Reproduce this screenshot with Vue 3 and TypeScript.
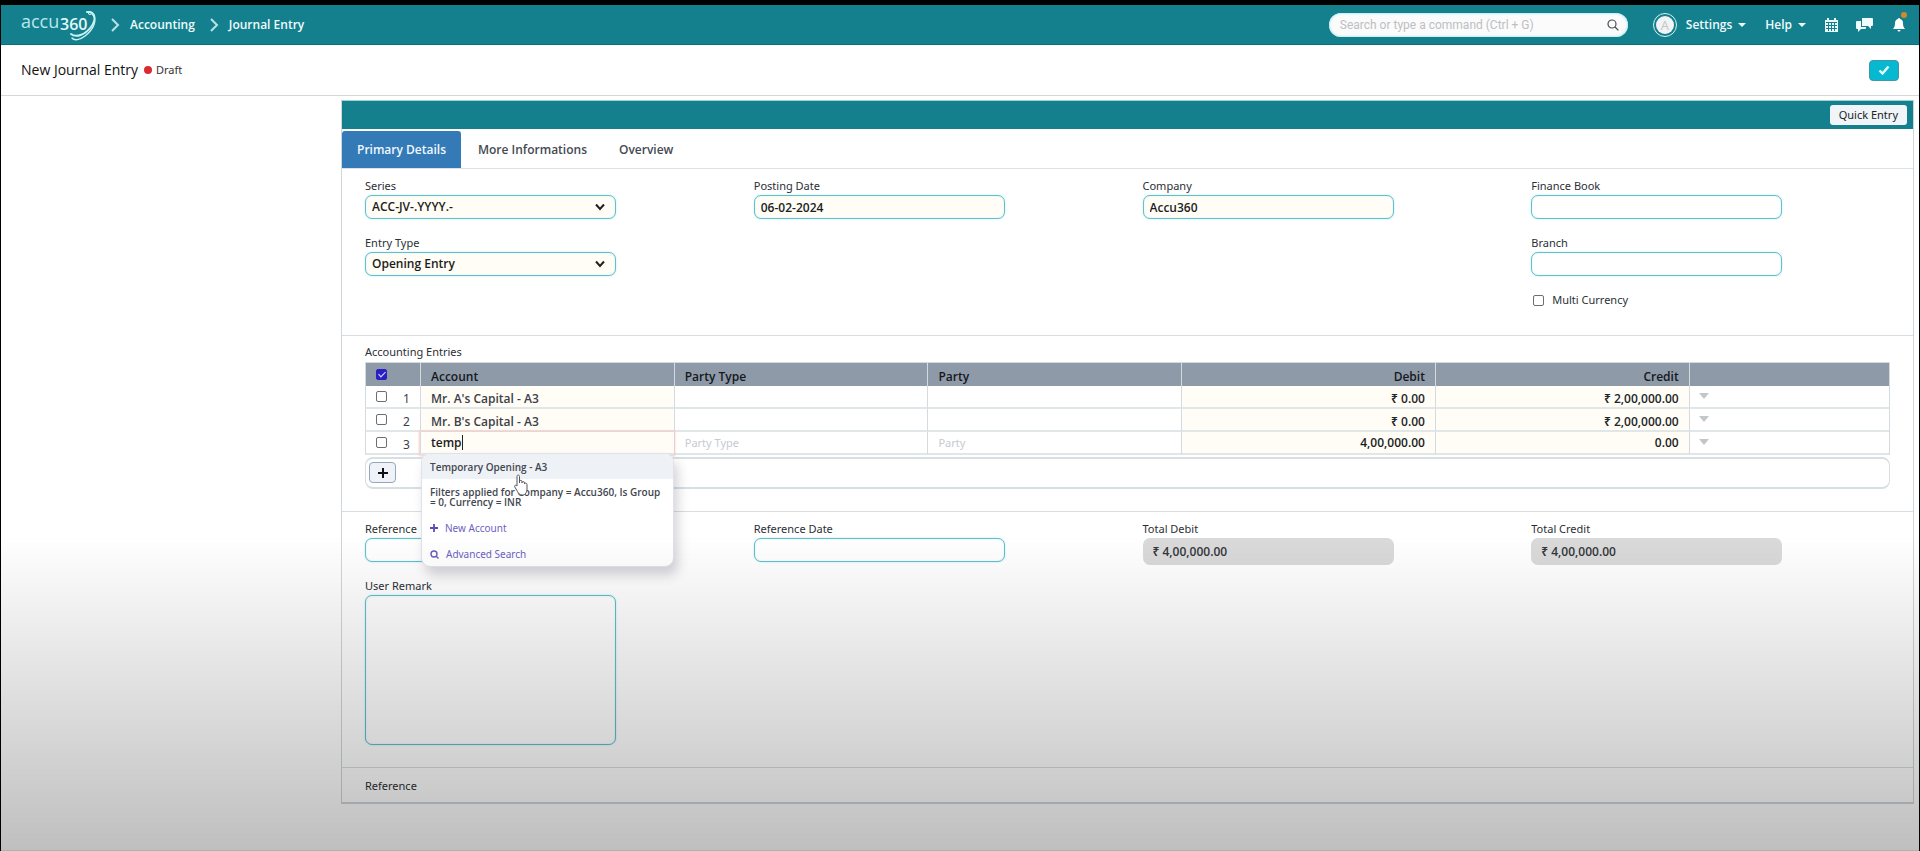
<script setup lang="ts">
import { ref } from 'vue'

interface Entry {
  idx: number
  account: string
  debit: string
  credit: string
}

const tabs: string[] = ['Primary Details', 'More Informations', 'Overview']
const activeTab = ref<string>(tabs[0])

const entries: Entry[] = [
  { idx: 1, account: "Mr. A's Capital - A3", debit: '₹ 0.00', credit: '₹ 2,00,000.00' },
  { idx: 2, account: "Mr. B's Capital - A3", debit: '₹ 0.00', credit: '₹ 2,00,000.00' },
]

const series = ref<string>('ACC-JV-.YYYY.-')
const entryType = ref<string>('Opening Entry')
const accountQuery = ref<string>('temp')
const allSelected = ref<boolean>(true)
</script>

<template>
  <div class="screen">
    <header class="navbar">
      <nav class="crumbs" aria-label="Breadcrumb">
        <a href="#" class="logo" aria-label="accu360 home">
          <svg width="78" height="34" viewBox="0 0 78 34" aria-hidden="true">
            <text x="0" y="20" class="logo-light">accu</text>
            <text x="39" y="22" class="logo-bold">360</text>
            <g fill="none" stroke="#c9f1f3" stroke-linecap="round">
              <path d="M66 4 C74 3 76 11 70 19 C64 27 55 30 50 26" stroke-width="2" />
              <path d="M71 6 C77 11 73 21 64 28 C59 32 53 33 51 30" stroke-width="1.4" />
              <circle cx="69" cy="5" r="1.6" stroke-width="1" />
            </g>
          </svg>
        </a>
        <svg class="sep" width="10" height="14" viewBox="0 0 10 14" aria-hidden="true"><path d="M2 1l6 6-6 6" /></svg>
        <a href="#">Accounting</a>
        <svg class="sep second" width="10" height="14" viewBox="0 0 10 14" aria-hidden="true"><path d="M2 1l6 6-6 6" /></svg>
        <a href="#">Journal Entry</a>
      </nav>
      <div class="tools">
        <div class="search">
          <input type="text" aria-label="Search" placeholder="Search or type a command (Ctrl + G)" />
          <svg width="12" height="12" viewBox="0 0 12 12" aria-hidden="true">
            <circle cx="5" cy="5" r="4" fill="none" stroke="#4a4f54" stroke-width="1.2" />
            <path d="M8 8l3.4 3.4" stroke="#4a4f54" stroke-width="1.3" />
          </svg>
        </div>
        <span class="avatar"><span>A</span></span>
        <button type="button" class="menu settings">Settings<i class="caret"></i></button>
        <button type="button" class="menu help">Help<i class="caret"></i></button>
        <button type="button" class="icon cal" aria-label="Calendar">
          <svg width="13" height="14" viewBox="0 0 13 14">
            <path fill="#e6fafa" d="M2 0h2v2h5V0h2v2h2v12H0V2h2z" />
            <path stroke="#14808e" stroke-width="1" d="M1 4.500h11M1 7.500h11M1 10.500h11M3.500 5v8M6.500 5v8M9.500 5v8" />
          </svg>
        </button>
        <button type="button" class="icon chat" aria-label="Chat">
          <svg width="17" height="14" viewBox="0 0 17 14" fill="#f2fcfc">
            <path d="M6 0h10q1 0 1 1v6q0 1-1 1h-1v3l-3-3H6z" />
            <path d="M1 3h4v6h5v1q0 1-1 1H5l-3 3v-3H1q-1 0-1-1V4q0-1 1-1z" />
          </svg>
        </button>
        <button type="button" class="icon bell" aria-label="Notifications">
          <svg width="12" height="14" viewBox="0 0 12 14" fill="#fff">
            <path d="M5 1a1 1 0 0 1 2 0c2 .6 3 2 3 4 0 3 .6 4.500 2 6H0c1.400-1.500 2-3 2-6 0-2 1-3.400 3-4zM4.500 12h3a1.500 1.500 0 0 1-3 0z" />
          </svg>
          <span class="dot"></span>
        </button>
      </div>
    </header>

    <div class="page-head">
      <h1>New Journal Entry</h1>
      <span class="status"></span>
      <span class="draft">Draft</span>
      <button type="button" class="save" aria-label="Save">
        <svg width="12" height="10" viewBox="0 0 12 10"><path d="M1.500 5.500l3 3 6-7" fill="none" stroke="#e6ffff" stroke-width="2.400" /></svg>
      </button>
    </div>

    <main class="panel">
      <div class="band"><button type="button">Quick Entry</button></div>

      <div class="tabs" role="tablist">
        <button
          v-for="t in tabs"
          :key="t"
          type="button"
          role="tab"
          :aria-selected="t === activeTab"
          :class="{ active: t === activeTab }"
          @click="activeTab = t"
        >{{ t }}</button>
      </div>

      <section class="grid main-fields">
        <div class="col">
          <div class="field">
            <label for="series">Series</label>
            <div class="select">
              <select id="series" v-model="series"><option>ACC-JV-.YYYY.-</option></select>
              <svg width="10" height="8" viewBox="0 0 10 8" aria-hidden="true"><path d="M1 1.500l4 4.500 4-4.500" /></svg>
            </div>
          </div>
          <div class="field">
            <label for="etype">Entry Type</label>
            <div class="select">
              <select id="etype" v-model="entryType"><option>Opening Entry</option></select>
              <svg width="10" height="8" viewBox="0 0 10 8" aria-hidden="true"><path d="M1 1.500l4 4.500 4-4.500" /></svg>
            </div>
          </div>
        </div>
        <div class="col">
          <div class="field">
            <label for="pdate">Posting Date</label>
            <input id="pdate" class="box req" type="text" value="06-02-2024" />
          </div>
        </div>
        <div class="col">
          <div class="field">
            <label for="company">Company</label>
            <input id="company" class="box req" type="text" value="Accu360" />
          </div>
        </div>
        <div class="col">
          <div class="field">
            <label for="fbook">Finance Book</label>
            <input id="fbook" class="box" type="text" />
          </div>
          <div class="field">
            <label for="branch">Branch</label>
            <input id="branch" class="box" type="text" />
          </div>
          <label class="check"><input type="checkbox" class="tick" />Multi Currency</label>
        </div>
      </section>

      <section class="entries">
        <h2>Accounting Entries</h2>
        <table>
          <colgroup>
            <col class="c-idx" />
            <col v-for="n in 5" :key="n" class="c-mid" />
            <col />
          </colgroup>
          <thead>
            <tr>
              <th class="sel"><input v-model="allSelected" type="checkbox" class="tick" aria-label="Select all" /></th>
              <th>Account</th>
              <th>Party Type</th>
              <th>Party</th>
              <th class="num">Debit</th>
              <th class="num">Credit</th>
              <th></th>
            </tr>
          </thead>
          <tbody>
            <tr v-for="e in entries" :key="e.idx">
              <td class="sel"><div><input type="checkbox" class="tick" :aria-label="'Row ' + e.idx" /><span>{{ e.idx }}</span></div></td>
              <td class="req">{{ e.account }}</td>
              <td></td>
              <td></td>
              <td class="req num">{{ e.debit }}</td>
              <td class="req num">{{ e.credit }}</td>
              <td class="more"><i class="caret"></i></td>
            </tr>
            <tr class="editing">
              <td class="sel"><div><input type="checkbox" class="tick" aria-label="Row 3" /><span>3</span></div></td>
              <td class="req account">
                <div class="typing"><input v-model="accountQuery" type="text" aria-label="Account" /><span class="text-cursor"></span></div>
                <div class="popup">
                  <button type="button" class="option">Temporary Opening - A3</button>
                  <p>Filters applied for Company = Accu360, Is Group = 0, Currency = INR</p>
                  <a href="#">
                    <svg width="8" height="8" viewBox="0 0 8 8" aria-hidden="true"><path d="M4 0v8M0 4h8" stroke="#5b4bb5" stroke-width="1.800" /></svg>
                    New Account
                  </a>
                  <a href="#">
                    <svg width="9" height="9" viewBox="0 0 9 9" fill="none" stroke="#6a5cc0" stroke-width="1.400" aria-hidden="true"><circle cx="4" cy="4" r="3" /><path d="M6 6l2.500 2.500" /></svg>
                    Advanced Search
                  </a>
                  <svg class="pointer" width="16" height="22" viewBox="0 0 16 22" aria-hidden="true">
                    <path
                      d="M3 2.500C3 .5 5.500.5 5.500 2.500V9V7.500C5.500 6 8 6 8 7.500V9C8 7 10.500 7.200 10.500 8.800V10C10.500 8.500 13 8.800 13 10.500V15C13 18 11.500 21 8.500 21C5.500 21 4.500 19.500 3.500 17.500L.8 13C0 11.500 1.800 10.500 3 12z"
                      fill="#fff" stroke="#55555c" stroke-width="1"
                    />
                  </svg>
                </div>
              </td>
              <td><input type="text" aria-label="Party Type" placeholder="Party Type" /></td>
              <td><input type="text" aria-label="Party" placeholder="Party" /></td>
              <td class="req"><input class="num" type="text" aria-label="Debit" value="4,00,000.00" /></td>
              <td class="req"><input class="num" type="text" aria-label="Credit" value="0.00" /></td>
              <td class="more"><i class="caret"></i></td>
            </tr>
          </tbody>
        </table>
        <div class="add-row">
          <button type="button" aria-label="Add row">
            <svg width="10" height="10" viewBox="0 0 10 10"><path d="M5 0v10M0 5h10" stroke="#101010" stroke-width="2" /></svg>
          </button>
        </div>
      </section>

      <section class="grid totals">
        <div class="col">
          <div class="field">
            <label for="refno">Reference</label>
            <input id="refno" class="box" type="text" />
          </div>
          <div class="field">
            <label for="remark">User Remark</label>
            <textarea id="remark" class="box"></textarea>
          </div>
        </div>
        <div class="col">
          <div class="field">
            <label for="refdate">Reference Date</label>
            <input id="refdate" class="box" type="text" />
          </div>
        </div>
        <div class="col">
          <div class="field">
            <label for="tdebit">Total Debit</label>
            <input id="tdebit" class="box total" type="text" readonly value="₹ 4,00,000.00" />
          </div>
        </div>
        <div class="col">
          <div class="field">
            <label for="tcredit">Total Credit</label>
            <input id="tcredit" class="box total" type="text" readonly value="₹ 4,00,000.00" />
          </div>
        </div>
      </section>

      <section class="reference">Reference</section>
    </main>
    <div class="shade"></div>
  </div>
</template>

<style>
body {
  margin: 0;
  background: #fff;
}
</style>

<style scoped>
.screen {
  --regular: "Noto Sans", "Open Sans", sans-serif;
  --strong: "Open Sans", "Noto Sans", sans-serif;
  --teal: #14808e;
  box-sizing: border-box;
  min-height: 100vh;
  border: 1px solid #000;
  border-top-width: 5px;
  border-bottom: 0;
  background: #fff;
  color: #2b2f36;
  font: 11px/16px var(--regular);
}
.screen *,
.screen *::before {
  box-sizing: border-box;
}
button,
input,
select,
textarea {
  margin: 0;
  font: inherit;
  color: inherit;
}
button {
  border: 0;
  padding: 0;
  background: none;
}
a {
  color: inherit;
  text-decoration: none;
}

/* top bar */
.navbar {
  display: flex;
  justify-content: space-between;
  height: 40px;
  padding-top: 1px;
  background: var(--teal);
  border-bottom: 1px solid #0f6c79;
  color: #eefbfb;
  font: 600 12px/16px var(--strong);
}
.crumbs,
.tools {
  display: flex;
  align-items: center;
}
.crumbs {
  padding-left: 20px;
}
.logo {
  height: 34px;
}
.logo-light {
  font: 400 18px "Open Sans", sans-serif;
  fill: #b9e8eb;
}
.logo-bold {
  font: 600 16px "Open Sans", sans-serif;
  fill: #e2fbfb;
}
.sep {
  margin: 0 10px 0 11px;
  fill: none;
  stroke: #b9e2e6;
  stroke-width: 2;
}
.sep.second {
  margin-left: 14px;
}
.search {
  display: flex;
  align-items: center;
  width: 299px;
  height: 24px;
  padding: 0 9px 0 11px;
  border-radius: 12px;
  background: #fbfbfb;
  box-shadow: inset 0 0 2px 1px #b5eef2;
}
.search input {
  flex: 1;
  min-width: 0;
  border: 0;
  padding: 0;
  outline: 0;
  background: none;
  font: 12px/16px Roboto, sans-serif;
}
.search input::placeholder {
  color: #bcbfc3;
}
.avatar {
  display: grid;
  place-items: center;
  width: 24px;
  height: 24px;
  margin: 0 9px 0 25px;
  border: 1px solid #d8f2f3;
  border-radius: 50%;
}
.avatar span {
  width: 18px;
  height: 18px;
  border-radius: 50%;
  background: #f1f3f4;
  color: #c2c6ca;
  font: 13px/18px var(--strong);
  text-align: center;
}
.menu {
  display: flex;
  align-items: center;
  gap: 6px;
  font-weight: 600;
}
.caret {
  border: 4px solid transparent;
  border-top: 4px solid currentColor;
  border-bottom: 0;
}
.help {
  margin-left: 19px;
}
.icon {
  position: relative;
  display: flex;
}
.cal {
  margin: 0 18px 0 19px;
}
.bell {
  margin: 0 14px 0 20px;
}
.dot {
  position: absolute;
  top: -6px;
  right: -2px;
  width: 6px;
  height: 6px;
  border-radius: 50%;
  background: #d08a2c;
}

/* title row */
.page-head {
  display: flex;
  align-items: center;
  height: 51px;
  padding: 0 20px;
  border-bottom: 1px solid #d5d8db;
}
h1 {
  margin: 0;
  color: #111;
  font: 500 14px/20px var(--strong);
}
.status {
  width: 8px;
  height: 8px;
  margin: 0 4px 0 6px;
  border-radius: 50%;
  background: #d92b30;
}
.draft {
  color: #333;
}
.save {
  display: grid;
  place-items: center;
  width: 30px;
  height: 21px;
  margin-left: auto;
  border: 1px solid #4097a5;
  border-radius: 4px;
  background: #06b9d0;
}

/* form panel */
.panel {
  margin: 4px 5px 0 340px;
  border: 1px solid #cfd5da;
  border-bottom-width: 2px;
  border-top-color: #9fd3d8;
}
.band {
  display: flex;
  align-items: center;
  justify-content: flex-end;
  height: 28px;
  padding-right: 6px;
  background: var(--teal);
}
.band button {
  height: 20px;
  padding: 0 9px;
  border-radius: 3px;
  background: #eff5f9;
  color: #222;
}
.tabs {
  display: flex;
  gap: 2px;
  height: 40px;
  padding-top: 2px;
  border-bottom: 1px solid #dfe2e5;
}
.tabs button {
  padding: 0 15px;
  border-radius: 3px 3px 0 0;
  color: #434a54;
  font: 600 12px/16px var(--strong);
}
.tabs .active {
  background: #337ab7;
  color: #f1f8ff;
}
.grid {
  display: grid;
  grid-template-columns: repeat(4, 1fr);
  padding: 9px 8px 0;
}
.main-fields {
  height: 167px;
  border-bottom: 1px solid #d9dde0;
}
.col {
  padding: 0 15px;
}
.field {
  width: 70%;
  margin-bottom: 16px;
}
.field label {
  display: block;
  height: 17px;
}
.box,
select {
  display: block;
  width: 100%;
  height: 24px;
  padding: 0 6px;
  border: 1px solid #67bdc9;
  border-radius: 7px;
  outline: 0;
  background: #fff;
  box-shadow: 0 0 2px #a8edf3, inset 0 0 2px #c9f7fa;
  color: #1c1c1c;
  font: 600 12px/16px var(--strong);
}
.select {
  position: relative;
}
select {
  appearance: none;
}
.select svg {
  position: absolute;
  top: 8px;
  right: 11px;
  fill: none;
  stroke: #222;
  stroke-width: 2;
  pointer-events: none;
}
select,
.box.req {
  background: #fffdf6;
}
.check {
  display: flex;
  align-items: center;
  gap: 8px;
  padding-left: 2px;
}
.tick {
  position: relative;
  flex: none;
  width: 11px;
  height: 11px;
  border: 1px solid #6d6d72;
  border-radius: 2px;
  appearance: none;
  background: #fff;
}
.tick:checked {
  border-color: #2a1fc4;
  background: #2a1fc4;
}
.tick:checked::before {
  content: "";
  position: absolute;
  left: 3px;
  top: 0;
  width: 4px;
  height: 7px;
  border: solid #dfe3ff;
  border-width: 0 1px 1px 0;
  transform: rotate(45deg);
}

/* entries table */
.entries {
  height: 176px;
  padding: 8px 23px 0;
  border-bottom: 1px solid #d9dde0;
}
h2 {
  margin: 0 0 2px;
  font: 11px/16px var(--regular);
}
table {
  width: 100%;
  border-collapse: separate;
  border-spacing: 0;
  table-layout: fixed;
  border: 1px solid #d3dbe0;
  border-width: 1px 1px 0 0;
  font: 600 12px/16px var(--strong);
}
.c-idx {
  width: 55px;
}
.c-mid {
  width: 16.65%;
}
th,
td {
  height: 23px;
  padding: 4px 10px 0;
  border-left: 1px solid #d3dbe0;
  border-bottom: 1px solid #d3dbe0;
  text-align: left;
  font-weight: 600;
  color: #3c4048;
}
th {
  border-bottom: 0;
  background: #8e9aa8;
  color: #15181c;
}
td {
  border-bottom: 2px solid #e1e6e8;
}
.num {
  text-align: right;
}
td.req {
  background: #fffdf6;
}
td.num {
  color: #22252a;
}
.sel {
  padding: 0 10px;
  font: 12px/16px var(--regular);
}
th.sel {
  vertical-align: top;
  padding-top: 6px;
  line-height: 1px;
}
td.sel div {
  display: flex;
  align-items: center;
  gap: 16px;
}
td.sel span {
  padding-top: 4px;
  line-height: 15px;
}
.more {
  vertical-align: top;
  padding: 7px 9px 0;
}
.more .caret {
  display: block;
  width: 10px;
  border-width: 6px 5px 0;
  color: #c4c6c8;
  line-height: 0;
}
.editing td {
  padding-top: 0;
  padding-bottom: 0;
}
.editing td.more {
  padding-top: 7px;
}
.editing td > input,
.typing input {
  display: block;
  width: 100%;
  height: 20px;
  padding: 0;
  border: 0;
  outline: 0;
  background: none;
  color: #1c1c1c;
}
.editing input::placeholder {
  color: #c6cad1;
  font: 11px/16px var(--regular);
}
.account {
  position: relative;
  box-shadow: 0 0 2px 1px #f6c9c6;
}
.typing {
  display: flex;
  align-items: center;
}
.typing input {
  width: auto;
  field-sizing: content;
}
.text-cursor {
  width: 1px;
  height: 15px;
  background: #222;
}
.popup {
  position: absolute;
  z-index: 2;
  top: 21px;
  left: 0;
  right: 0;
  overflow: hidden;
  height: 114px;
  border: 1px solid #dfe2e8;
  border-radius: 9px;
  background: #fff;
  box-shadow: 4px 8px 12px rgba(60, 60, 80, 0.22);
  font: 600 10px/10px var(--strong);
  color: #42464e;
}
.option {
  display: block;
  width: 100%;
  height: 25px;
  padding: 0 8px;
  background: #eef1f6;
  text-align: left;
}
.popup p {
  margin: 8px 8px 16px;
  width: 232px;
}
.popup a {
  display: flex;
  align-items: center;
  gap: 7px;
  height: 10px;
  margin: 0 8px 16px;
  color: #6d5fc4;
  font-weight: 400;
  font-family: var(--regular);
}
.pointer {
  position: absolute;
  top: 20px;
  left: 92px;
}
.add-row {
  height: 32px;
  margin-top: 2px;
  padding: 3px;
  border: 1px solid #d8dfe3;
  border-width: 2px 1px;
  border-radius: 8px;
}
.add-row button {
  display: grid;
  place-items: center;
  width: 27px;
  height: 21px;
  border: 1px solid #93a9ba;
  border-radius: 4px;
  background: #eff3f9;
}

/* totals and remark */
.totals {
  height: 256px;
  border-bottom: 1px solid #dadddf;
}
.box.total {
  height: 27px;
  padding: 0 10px;
  border: 0;
  background: #dadada;
  box-shadow: none;
  color: #33363b;
}
textarea.box {
  height: 150px;
  padding: 6px;
  resize: none;
}
.reference {
  padding: 10px 23px 8px;
}
.shade {
  position: fixed;
  z-index: 3;
  right: 1px;
  bottom: 0;
  left: 1px;
  height: 37vh;
  border-bottom: 1px solid #a5b8a2;
  background: linear-gradient(rgba(0, 0, 0, 0), rgba(0, 0, 0, 0.25));
  pointer-events: none;
}
</style>
